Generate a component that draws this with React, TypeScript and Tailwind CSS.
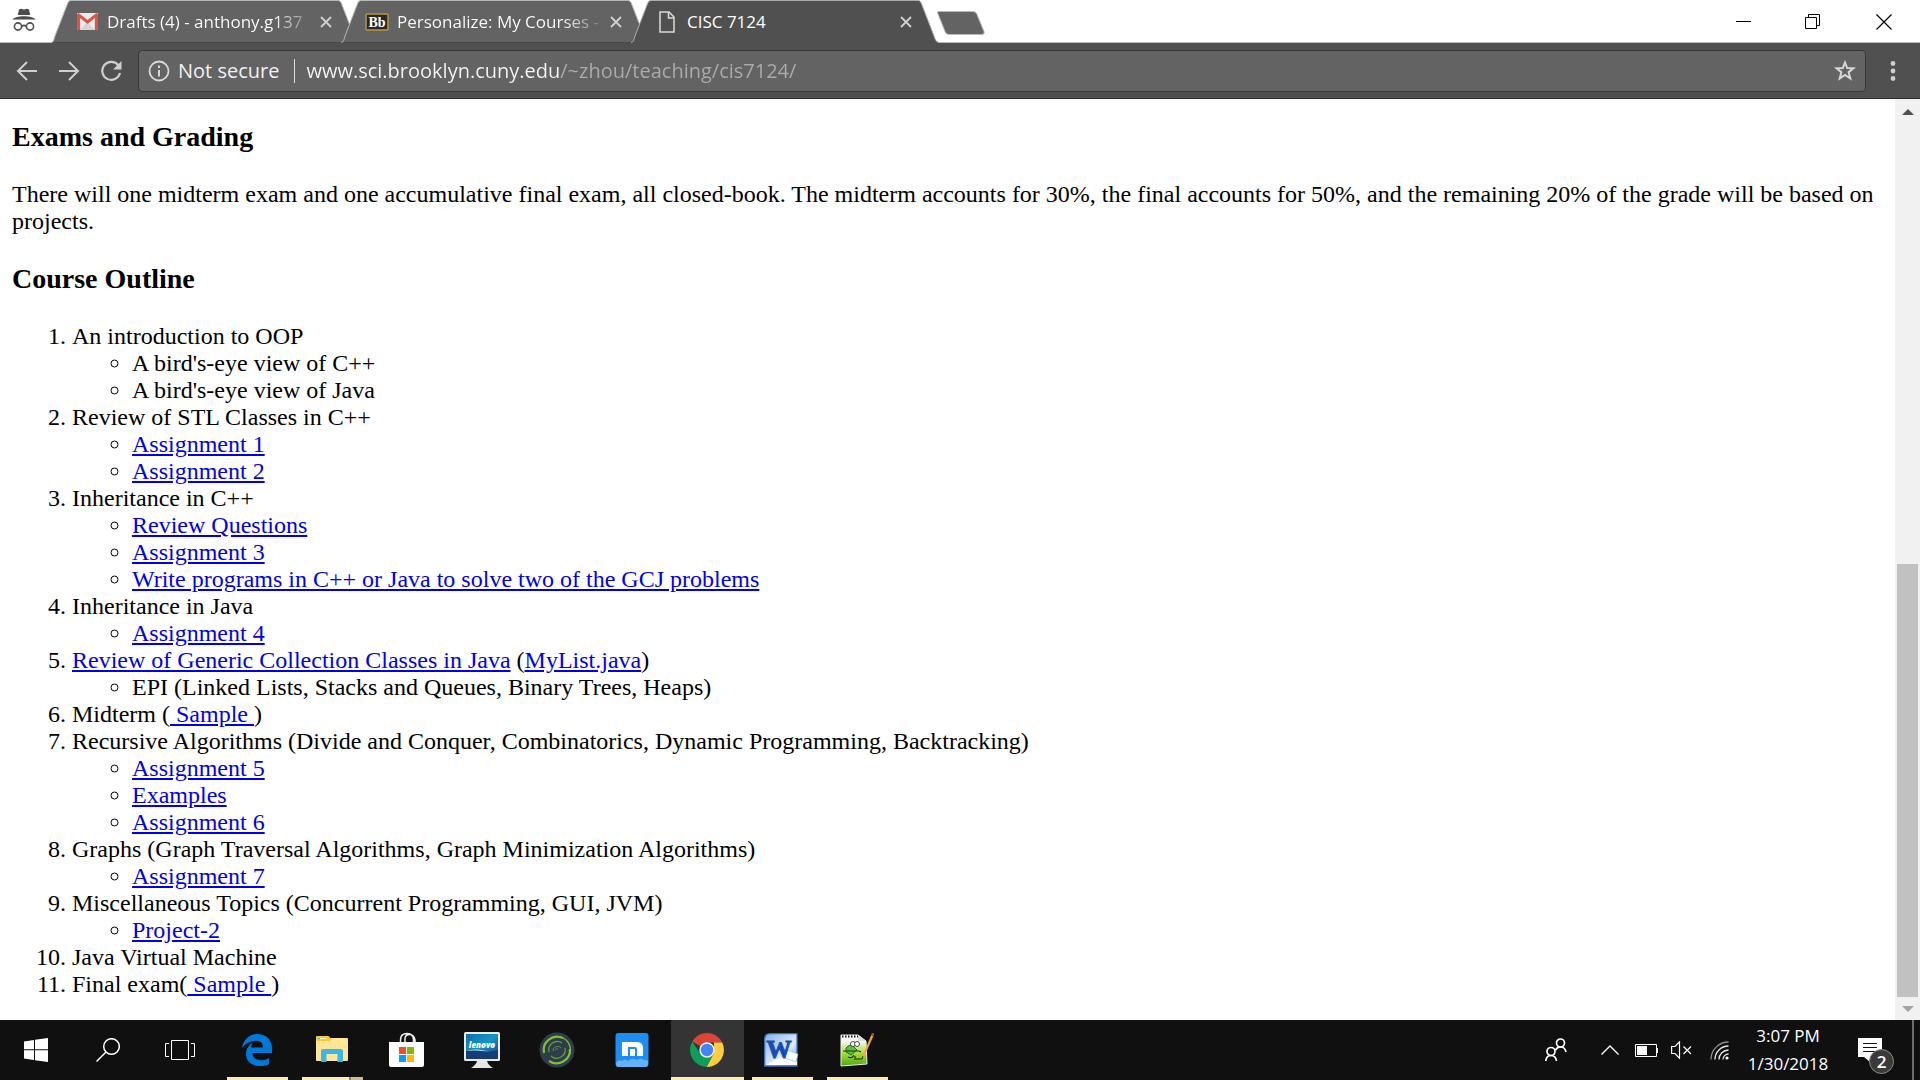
import React from "react";

type Entry = { label: string; href?: string };
type Topic = { content: React.ReactNode; entries?: Entry[] };

function Link({ children, href = "#" }: { children: React.ReactNode; href?: string }) {
  return (
    <a href={href} className="text-[#0000ee] underline">
      {children}
    </a>
  );
}

const topics: Topic[] = [
  {
    content: "An introduction to OOP",
    entries: [{ label: "A bird's-eye view of C++" }, { label: "A bird's-eye view of Java" }],
  },
  {
    content: "Review of STL Classes in C++",
    entries: [
      { label: "Assignment 1", href: "#a1" },
      { label: "Assignment 2", href: "#a2" },
    ],
  },
  {
    content: "Inheritance in C++",
    entries: [
      { label: "Review Questions", href: "#review" },
      { label: "Assignment 3", href: "#a3" },
      { label: "Write programs in C++ or Java to solve two of the GCJ problems", href: "#gcj" },
    ],
  },
  { content: "Inheritance in Java", entries: [{ label: "Assignment 4", href: "#a4" }] },
  {
    content: (
      <>
        <Link>Review of Generic Collection Classes in Java</Link> (<Link>MyList.java</Link>)
      </>
    ),
    entries: [{ label: "EPI (Linked Lists, Stacks and Queues, Binary Trees, Heaps)" }],
  },
  {
    content: (
      <>
        Midterm (<Link>{" Sample "}</Link>)
      </>
    ),
  },
  {
    content: "Recursive Algorithms (Divide and Conquer, Combinatorics, Dynamic Programming, Backtracking)",
    entries: [
      { label: "Assignment 5", href: "#a5" },
      { label: "Examples", href: "#examples" },
      { label: "Assignment 6", href: "#a6" },
    ],
  },
  {
    content: "Graphs (Graph Traversal Algorithms, Graph Minimization Algorithms)",
    entries: [{ label: "Assignment 7", href: "#a7" }],
  },
  {
    content: "Miscellaneous Topics (Concurrent Programming, GUI, JVM)",
    entries: [{ label: "Project-2", href: "#p2" }],
  },
  { content: "Java Virtual Machine" },
  {
    content: (
      <>
        Final exam(<Link>{" Sample "}</Link>)
      </>
    ),
  },
];

/* ---------- Browser frame ---------- */

function IncognitoIcon() {
  return (
    <svg width="24" height="30" viewBox="0 0 24 30" aria-hidden="true">
      <path d="M7 1.5 9 .8l3 .8 3-.8 2 .7 1.2 5.5H5.8z" fill="#4d4d4d" />
      <path d="M0 11.5c3-2.200 6-3.300 12-3.300s9 1.100 12 3.300z" fill="#4d4d4d" />
      <g fill="none" stroke="#4d4d4d" strokeWidth="1.600">
        <circle cx="6" cy="18.500" r="3.600" />
        <circle cx="18" cy="18.500" r="3.600" />
        <path d="M9.600 18.300q2.400-1.800 4.800 0" />
      </g>
    </svg>
  );
}

function GmailIcon() {
  return (
    <svg width="21" height="17" viewBox="0 0 20 17" preserveAspectRatio="none" aria-hidden="true">
      <rect width="20" height="17" rx="1" fill="#ececec" />
      <path d="M3 17 10 9l7 8z" fill="#d5d5d5" />
      <path d="M0 1.500V16a1 1 0 0 0 1 1h2V5l7 6 7-6v12h2a1 1 0 0 0 1-1V1.500L18.500 0 10 7 1.500 0z" fill="#dd5348" />
    </svg>
  );
}

function BlackboardIcon() {
  return (
    <svg width="24" height="18" viewBox="0 0 24 18" aria-hidden="true">
      <rect x="1" y="1" width="22" height="16" rx="1" fill="#292929" stroke="#b99543" strokeWidth="1.500" />
      <text x="12" y="13.500" textAnchor="middle" fontSize="14" fontWeight="700" fontFamily="Liberation Serif, serif" fill="#fff">
        Bb
      </text>
    </svg>
  );
}

function PageIcon() {
  return (
    <svg width="16" height="22" viewBox="0 0 16 22" fill="none" stroke="#d9d9d9" strokeWidth="1.500" aria-hidden="true">
      <path d="M1 1h9l5 5v15H1z" />
      <path d="M9.500 1v6H15" />
    </svg>
  );
}

function Tab({ title, icon, active = false }: { title: string; icon: React.ReactNode; active?: boolean }) {
  return (
    <div className={active ? "relative z-10 -mr-[18px] h-[43px] w-[308px]" : "relative -mr-[18px] h-[43px] w-[308px]"}>
      <svg className="absolute inset-0 h-full w-full" viewBox="0 0 308 43" preserveAspectRatio="none" aria-hidden="true">
        <path
          d="M0 43C3 42 3 39 4 36L16 5C17 2 18 .5 20 .5H287C289 .5 290 2 291 5L303 36C304 39 305 42 308 43z"
          fill={active ? "#505050" : "#636363"}
        />
        <path
          d="M0 42.500C3 42 3 39 4 36L16 5C17 2 18 .5 20 .5H287C289 .5 290 2 291 5L303 36C304 39 305 42 308 42.500"
          fill="none"
          stroke={active ? "#a9adac" : "#b4b8b7"}
        />
        {!active && <path d="M2 42.500H306" stroke="#494949" />}
      </svg>
      <div className="relative flex h-full items-center pr-[23px] pl-6">
        <span className="flex w-6 shrink-0 justify-center">{icon}</span>
        <span
          className={
            active
              ? "ml-2 flex-1 text-[17px] whitespace-nowrap text-white"
              : "ml-2 flex-1 bg-[linear-gradient(to_right,white_165px,#636363_210px)] bg-clip-text text-[17px] whitespace-nowrap text-transparent"
          }
        >
          {title}
        </span>
        <button type="button" aria-label={`Close ${title}`} className="flex h-5 w-5 items-center justify-center">
          <svg width="12" height="12" viewBox="0 0 12 12" stroke="#d0d0d0" strokeWidth="1.800">
            <path d="M1 1l10 10M11 1 1 11" />
          </svg>
        </button>
      </div>
    </div>
  );
}

function TitleBar() {
  return (
    <div className="flex h-[43px] items-stretch bg-white shadow-[inset_0_-1px_0_#b4b8b7]">
      <div className="flex w-[51px] justify-center pt-2 pr-1">
        <IncognitoIcon />
      </div>
      <div className="flex">
        <Tab title="Drafts (4) - anthony.g137" icon={<GmailIcon />} />
        <Tab title="Personalize: My Courses -" icon={<BlackboardIcon />} />
        <Tab title="CISC 7124" icon={<PageIcon />} active />
      </div>
      <button type="button" aria-label="New tab" className="ml-[14px] flex pt-[10px]">
        <svg width="52" height="26" viewBox="0 0 52 26" aria-hidden="true">
          <path d="M3 1.500H38q3 0 4 3l7 17q1 3-2 3H14q-3 0-4-3L3 4q-1-2.500 0-2.500z" fill="#636363" stroke="#b9bcbb" />
        </svg>
      </button>
      <div className="ml-auto flex">
        <button type="button" aria-label="Minimize" className="flex w-[69px] items-center justify-center">
          <svg width="16" height="16" stroke="#000">
            <path d="M0 7.500h15" />
          </svg>
        </button>
        <button type="button" aria-label="Restore" className="flex w-[69px] items-center justify-center">
          <svg width="16" height="16" fill="none" stroke="#000">
            <path d="M.5 3.500h11v11H.5zM3.500 3.500v-3h11v11h-3" />
          </svg>
        </button>
        <button type="button" aria-label="Close" className="flex w-[73px] items-center justify-center">
          <svg width="16" height="16" stroke="#000" strokeWidth="1.200">
            <path d="M.5.5l15 15M15.500.5l-15 15" />
          </svg>
        </button>
      </div>
    </div>
  );
}

function Toolbar() {
  return (
    <div className="flex h-14 items-center border-b border-[#2c2c2c] bg-[#505050]">
      <div className="flex w-[138px] items-center pl-4">
        <button type="button" aria-label="Back" className="flex w-[42px]">
          <svg width="22" height="20" viewBox="0 0 22 20" fill="none" stroke="#cfcfcf" strokeWidth="2">
            <path d="M21 10H2M11 1l-9 9 9 9" />
          </svg>
        </button>
        <button type="button" aria-label="Forward" className="flex w-[42px]">
          <svg width="22" height="20" viewBox="0 0 22 20" fill="none" stroke="#cfcfcf" strokeWidth="2">
            <path d="M1 10h19M11 1l9 9-9 9" />
          </svg>
        </button>
        <button type="button" aria-label="Reload" className="flex">
          <svg width="22" height="22" viewBox="0 0 22 22" fill="none" stroke="#cfcfcf" strokeWidth="2.200">
            <path d="M18.500 5.500A9 9 0 1 0 20 13" />
            <path d="M21.500 1v8.500H13z" fill="#cfcfcf" stroke="none" />
          </svg>
        </button>
      </div>
      <div className="flex h-[42px] flex-1 items-center rounded border border-[#383838] bg-[#636363] pr-[9px] pl-[9px]">
        <svg width="22" height="22" viewBox="0 0 22 22" fill="none" stroke="#d8d8d8" strokeWidth="1.800" aria-hidden="true">
          <circle cx="11" cy="11" r="9.500" />
          <path d="M11 10v6.500M11 5.500V8" strokeWidth="2" />
        </svg>
        <label htmlFor="address" className="ml-2 text-[20px] text-[#f1f1f1]">
          Not secure
        </label>
        <span className="mr-[11px] ml-[15px] h-6 w-px bg-[#dcdcdc]" />
        <input
          id="address"
          type="text"
          defaultValue="www.sci.brooklyn.cuny.edu/~zhou/teaching/cis7124/"
          className="min-w-0 flex-1 bg-[linear-gradient(to_right,#f5f5f5_253px,#acacac_253px)] bg-clip-text text-[20px] text-transparent outline-none"
        />
        <button type="button" aria-label="Bookmark this page" className="flex">
          <svg width="22" height="21" viewBox="0 0 22 21" fill="none" stroke="#d8d8d8" strokeWidth="2">
            <path d="M11 2.500 13.200 8 19.500 8.300 14.600 12.200 16.300 18.500 11 15 5.700 18.500 7.400 12.200 2.500 8.300 8.800 8z" />
          </svg>
        </button>
      </div>
      <button type="button" aria-label="Menu" className="flex w-[54px] justify-center">
        <svg width="6" height="20" viewBox="0 0 6 20" fill="#cfcfcf">
          <circle cx="3" cy="2.500" r="2.400" />
          <circle cx="3" cy="10" r="2.400" />
          <circle cx="3" cy="17.500" r="2.400" />
        </svg>
      </button>
    </div>
  );
}

function CoursePage() {
  return (
    <main className="min-w-0 flex-1 bg-white px-3 pt-[22px] font-['Liberation_Serif',serif] text-[24px] leading-[27px] text-black">
      <h3 className="text-[28px] leading-8 font-bold">Exams and Grading</h3>
      <p className="my-7">
        There will one midterm exam and one accumulative final exam, all closed-book. The midterm accounts for 30%, the
        final accounts for 50%, and the remaining 20% of the grade will be based on projects.
      </p>
      <h3 className="text-[28px] leading-8 font-bold">Course Outline</h3>
      <ol className="mt-7 list-decimal pl-[60px]">
        {topics.map((topic, i) => (
          <li key={i}>
            {topic.content}
            {topic.entries && (
              <ul className="list-[circle] pl-[60px]">
                {topic.entries.map((entry) => (
                  <li key={entry.label}>
                    {entry.href ? <Link href={entry.href}>{entry.label}</Link> : entry.label}
                  </li>
                ))}
              </ul>
            )}
          </li>
        ))}
      </ol>
    </main>
  );
}

function ScrollBar() {
  return (
    <div className="flex w-[25px] flex-col items-center bg-[#f1f1f1]">
      <svg width="12" height="24" viewBox="0 0 12 24" fill="#505050" aria-hidden="true">
        <path d="M0 16 6 10l6 6z" />
      </svg>
      <div className="grow-[441]" />
      <div className="w-[21px] grow-[433] bg-[#c1c1c1]" />
      <svg width="12" height="23" viewBox="0 0 12 23" fill="#a3a3a3" aria-hidden="true">
        <path d="M0 9h12l-6 6z" />
      </svg>
    </div>
  );
}

/* ---------- Taskbar ---------- */

function WindowsIcon() {
  return (
    <svg width="24" height="24" viewBox="0 0 24 24" fill="#fff">
      <path d="M0 3.400 10 2v9.300H0zM11 1.800 24 0v11.300H11zM0 12.300h10V22L0 20.600zM11 12.300h13V24l-13-1.800z" />
    </svg>
  );
}

function SearchIcon() {
  return (
    <svg width="24" height="24" viewBox="0 0 24 24" fill="none" stroke="#fff" strokeWidth="1.500">
      <circle cx="15.500" cy="8.500" r="7.800" />
      <path d="M10 14 .5 23.500" />
    </svg>
  );
}

function TaskViewIcon() {
  return (
    <svg width="30" height="20" viewBox="0 0 30 20" fill="none" stroke="#fff">
      <path d="M6.500.5h17v19h-17zM4 3.500H.5v13H4M26 3.500h3.500v13H26" />
    </svg>
  );
}

function EdgeIcon() {
  return (
    <svg width="30" height="32" viewBox="0 0 30 32">
      <path
        d="M0 14C1.200 6 7 0 15.500 0 25 0 30 6.500 30 14.800V19H10.300c.2 5 4.200 7.300 8.700 7.300 3.300 0 5.900-.9 8-2.300v6.200c-2.500 1.300-5.700 1.800-9 1.800C9.500 32 4 27.200 4 20c0-5 2.600-9.200 7-11.600-1.300 1.500-1.700 3.200-1.900 5H21c0-4-2.200-6.600-6.800-6.600C8.800 6.800 3.200 9.600 0 14z"
        fill="#0078d7"
      />
    </svg>
  );
}

function ExplorerIcon() {
  return (
    <svg width="32" height="28" viewBox="0 0 32 28">
      <path d="M0 1q0-1 1-1h11q1.500 0 2 1.500L15 3v3H0z" fill="#fdc92f" />
      <path d="M0 5h13l2-3h16q1 0 1 1v21q0 1-1 1H1q-1 0-1-1z" fill="#ffe694" />
      <path d="M2 2.500h2" stroke="#36b6ea" strokeWidth="1.200" />
      <path d="M4 2.500h6" stroke="#fff" strokeWidth="1.200" />
      <path d="M5 26V15q0-2 2-2h18q2 0 2 2v11h-5.500v-8h-11v8z" fill="#3ab7e8" />
    </svg>
  );
}

function StoreIcon() {
  return (
    <svg width="35" height="36" viewBox="0 0 35 36">
      <path d="M11.500 11V8q0-6.500 6.500-6.500T24.500 8v3M16 11V7q0-4.500 4.500-4.500T26 8v3" fill="none" stroke="#eee" strokeWidth="1.500" />
      <path d="M0 10h35v23q0 2-2 2H2q-2 0-2-2z" fill="#fff" />
      <path d="M10 15h7v7h-7z" fill="#f25022" />
      <path d="M18 15h7v7h-7z" fill="#7fba00" />
      <path d="M10 23h7v7h-7z" fill="#00a4ef" />
      <path d="M18 23h7v7h-7z" fill="#ffb900" />
    </svg>
  );
}

function LenovoIcon() {
  return (
    <svg width="36" height="36" viewBox="0 0 36 36">
      <defs>
        <linearGradient id="lenovo-screen" x1="0" y1="0" x2="1" y2="1">
          <stop offset="0" stopColor="#0f6fa8" />
          <stop offset=".5" stopColor="#1696c6" />
          <stop offset="1" stopColor="#173a78" />
        </linearGradient>
      </defs>
      <rect width="36" height="29" rx="1.500" fill="#ececec" />
      <rect x="2" y="2" width="32" height="25" fill="url(#lenovo-screen)" />
      <path d="M2 19q8-3 16-1t16 0v9H2z" fill="#153d77" />
      <path d="M2 19q8-3 16-1t16 0q-8 2-16 1t-16 0z" fill="#a7dbea" />
      <text x="18" y="16" textAnchor="middle" fontSize="8" fontWeight="800" fontStyle="italic" fontFamily="Open Sans, sans-serif" fill="#fff">
        lenovo
      </text>
      <path d="M13 29h10q1 4 6 7H7q5-3 6-7z" fill="#e6e6e6" />
    </svg>
  );
}

function SwirlIcon() {
  return (
    <svg width="36" height="36" viewBox="0 0 36 36" fill="none">
      <circle cx="18" cy="18" r="17.500" fill="#2d3d4b" />
      <g stroke="#84bd36">
        <path d="M5 21A13.500 13.500 0 0 1 24 6" strokeWidth="2.200" />
        <path d="M18 4.500A13.500 13.500 0 0 1 30 24" strokeWidth="1.200" />
        <path d="M31 17A13.500 13.500 0 0 1 10 29" strokeWidth="2.200" />
        <path d="M10 20a8.500 8.500 0 0 1 13-9M26 16a8.500 8.500 0 0 1-14 8" strokeWidth="1.200" opacity=".75" />
        <path d="M14 19a4.500 4.500 0 0 1 8-3M16 18.500q1-2.500 3-1.500" strokeWidth="1" opacity=".6" />
      </g>
    </svg>
  );
}

function MaxthonIcon() {
  return (
    <svg width="34" height="36" viewBox="0 0 34 36">
      <rect x=".5" y="1" width="33" height="34" rx="3" fill="#1e8df2" />
      <path d="M1 31q3-4 6-2 3-3 6 0 4-4 9-1 4-3 7 0 2-1 4 1v3q0 3-3 3H4q-3 0-3-3z" fill="#62b2f7" />
      <path d="M7 24V10h15q6 0 6 6v8h-6v-7q0-2-2-2h-7v9z" fill="#fff" />
      <path d="M15 17h5v7h-5z" fill="#fff" />
    </svg>
  );
}

function ChromeIcon() {
  return (
    <svg width="34" height="34" viewBox="0 0 34 34">
      <path d="M17 17 2.300 8.500A17 17 0 0 1 31.700 8.500L32.200 9.500H17z" fill="#db4437" />
      <path d="M32.200 9.500A17 17 0 0 1 16.500 34L24 20V9.500z" fill="#ffcd40" />
      <path d="M2.300 8.500A17 17 0 0 0 16.500 34L23.500 21 17 17 10.500 21z" fill="#0f9d58" />
      <circle cx="17" cy="17" r="7.700" fill="#f1f1f1" />
      <circle cx="17" cy="17" r="6.200" fill="#4285f4" />
    </svg>
  );
}

function WordIcon() {
  return (
    <svg width="35" height="34" viewBox="0 0 35 34">
      <defs>
        <linearGradient id="word-page" x1="0" y1="0" x2="1" y2="1">
          <stop offset="0" stopColor="#85b4e8" />
          <stop offset=".6" stopColor="#dce9f8" />
          <stop offset="1" stopColor="#6e9fdd" />
        </linearGradient>
      </defs>
      <path d="M6 .7H33V33H.7V6q0-5.300 5.300-5.300z" fill="url(#word-page)" stroke="#3c6fbd" strokeWidth="1.300" />
      <path d="M3 31 20 23l13 5v4H3z" fill="#fff" />
      <path d="m23 17 11 4-2 8-11-4z" fill="#f8fbff" stroke="#8caee0" strokeWidth=".6" />
      <text x="15" y="25" textAnchor="middle" fontSize="25" fontWeight="700" fontFamily="Liberation Serif, serif" fill="#174db0" stroke="#174db0">
        W
      </text>
    </svg>
  );
}

function NotepadIcon() {
  return (
    <svg width="34" height="34" viewBox="0 0 34 34">
      <defs>
        <linearGradient id="notepad-page" x1="0" y1="0" x2="0" y2="1">
          <stop offset=".2" stopColor="#f7f8f5" />
          <stop offset=".65" stopColor="#9ad62f" />
          <stop offset="1" stopColor="#47a916" />
        </linearGradient>
      </defs>
      <path d="M1 2h17l8 6 1 23L1 33z" fill="url(#notepad-page)" stroke="#e9e9e9" />
      <path d="M18 2v6h8" fill="#ddd" />
      <path d="M2 3.500h16" stroke="#222" strokeWidth="2" strokeDasharray="1.500 1.500" />
      <path d="M6 15q4-5 8-1l3 3-6 5-5-3z" fill="#55c43a" stroke="#254f17" strokeWidth=".8" />
      <circle cx="13" cy="11" r="2.500" fill="#fff" stroke="#222" strokeWidth=".8" />
      <circle cx="17" cy="11" r="2.500" fill="#fff" stroke="#222" strokeWidth=".8" />
      <path d="M3 18h16l2 1M8 24q4 2 6-2M15 27v-4M16 26h6" fill="none" stroke="#25301b" strokeWidth="1.200" />
      <path d="M33 1 23 24" stroke="#edae2b" strokeWidth="2.200" />
      <path d="m33.500 0-1.300 3" stroke="#b83c32" strokeWidth="2.500" />
      <path d="m23 23-1 3" stroke="#333" />
    </svg>
  );
}

type App = { name: string; icon: React.ReactNode; state?: "open" | "stacked" | "focused" };

const apps: App[] = [
  { name: "Microsoft Edge", icon: <EdgeIcon />, state: "open" },
  { name: "File Explorer", icon: <ExplorerIcon />, state: "stacked" },
  { name: "Store", icon: <StoreIcon /> },
  { name: "Lenovo", icon: <LenovoIcon /> },
  { name: "Utility", icon: <SwirlIcon /> },
  { name: "Maxthon", icon: <MaxthonIcon /> },
  { name: "Google Chrome", icon: <ChromeIcon />, state: "focused" },
  { name: "Word", icon: <WordIcon />, state: "open" },
  { name: "Notepad++", icon: <NotepadIcon />, state: "open" },
];

function TaskButton({ app }: { app: App }) {
  return (
    <button
      type="button"
      aria-label={app.name}
      className={
        app.state === "focused"
          ? "flex w-[73px] flex-col items-center bg-[#343434]"
          : "flex w-[73px] flex-col items-center"
      }
    >
      <span className="flex flex-1 items-center pt-[3px] pr-0.5">{app.icon}</span>
      {app.state === "focused" && <span className="h-[3px] w-full bg-[#fdeeb0]" />}
      {app.state === "open" && <span className="h-[3px] w-[61px] bg-[#fdeeb0]" />}
      {app.state === "stacked" && (
        <span className="flex h-[3px] w-[61px]">
          <span className="flex-1 bg-[#fdeeb0]" />
          <span className="w-0.5 bg-[#8b8467]" />
          <span className="w-3 bg-[#c9bf8f]" />
        </span>
      )}
      {!app.state && <span className="h-[3px]" />}
    </button>
  );
}

function Tray() {
  return (
    <div className="ml-auto flex items-center">
      <button type="button" aria-label="People" className="mr-[34px]">
        <svg width="22" height="24" viewBox="0 0 22 24" fill="none" stroke="#fff" strokeWidth="1.700">
          <circle cx="15.500" cy="5" r="4" />
          <circle cx="6" cy="13.500" r="4" />
          <path d="M.8 23q.5-5.500 5.200-5.500t5.500 5.500M10.500 12q1.500-3 5-3 4.500 0 5.500 5" />
        </svg>
      </button>
      <button type="button" aria-label="Show hidden icons" className="mr-4">
        <svg width="18" height="10" viewBox="0 0 18 10" fill="none" stroke="#fff" strokeWidth="1.300">
          <path d="m.5 9.500 8.500-8.500 8.500 8.500" />
        </svg>
      </button>
      <button type="button" aria-label="Battery" className="mr-[13px]">
        <svg width="23" height="13" viewBox="0 0 23 13" fill="none" stroke="#fff">
          <path d="M.5.5h21v12H.5z" />
          <path d="M2 2h10v9H2zM22 4h1v5h-1z" fill="#fff" stroke="none" />
        </svg>
      </button>
      <button type="button" aria-label="Volume muted" className="mr-[18px]">
        <svg width="21" height="18" viewBox="0 0 21 18" fill="none" stroke="#fff" strokeWidth="1.200">
          <path d="M.6 5.500H4L8.500.8v16.400L4 12.500H.6zM12.500 5.500l7.500 7.500M20 5.500 12.500 13" />
        </svg>
      </button>
      <button type="button" aria-label="Wi-Fi" className="mr-4">
        <svg width="19" height="19" viewBox="0 0 19 19" fill="none" strokeWidth="1.300">
          <path d="M1 18.500A17.500 17.500 0 0 1 18.500 1" stroke="#8d8d8d" />
          <path d="M5 18.500A13.500 13.500 0 0 1 18.500 5M9 18.500A9.500 9.500 0 0 1 18.500 9M13 18.500a5.500 5.500 0 0 1 5.500-5.500" stroke="#e8e8e8" />
          <circle cx="17" cy="17" r="1.600" fill="#fff" />
        </svg>
      </button>
      <div className="flex w-[86px] flex-col items-center text-[17px] leading-7 text-white">
        <span>3:07 PM</span>
        <span>1/30/2018</span>
      </div>
      <button type="button" aria-label="2 new notifications" className="relative ml-[27px] h-6 w-6">
        <svg width="24" height="24" viewBox="0 0 24 24" aria-hidden="true">
          <path d="M0 0h24v19H12v5l-6-5H0z" fill="#fff" />
          <path d="M5 5.500h14M5 9.500h14M5 13.500h14" stroke="#101010" />
        </svg>
        <span className="absolute top-[11px] left-[11px] flex h-[25px] w-[25px] items-center justify-center rounded-full border border-[#888] bg-[#3a3a3a] text-[17px] font-semibold text-white">
          2
        </span>
      </button>
      <span className="mr-[6px] ml-[30px] h-[60px] w-0.5 bg-[#6b6b6b]" />
    </div>
  );
}

function Taskbar() {
  return (
    <footer className="flex h-[60px] items-stretch bg-[#101010]">
      <button type="button" aria-label="Start" className="flex w-[72px] items-center justify-center">
        <WindowsIcon />
      </button>
      <button type="button" aria-label="Search" className="flex w-[72px] items-center justify-center">
        <SearchIcon />
      </button>
      <button type="button" aria-label="Task view" className="mr-[5px] flex w-[72px] items-center justify-center">
        <TaskViewIcon />
      </button>
      <div className="flex gap-0.5">
        {apps.map((app) => (
          <TaskButton key={app.name} app={app} />
        ))}
      </div>
      <Tray />
    </footer>
  );
}

export default function App() {
  return (
    <div className="flex min-h-screen flex-col bg-white font-['Open_Sans',sans-serif]">
      <header>
        <TitleBar />
        <Toolbar />
      </header>
      <div className="flex flex-1 items-stretch">
        <CoursePage />
        <ScrollBar />
      </div>
      <Taskbar />
    </div>
  );
}
